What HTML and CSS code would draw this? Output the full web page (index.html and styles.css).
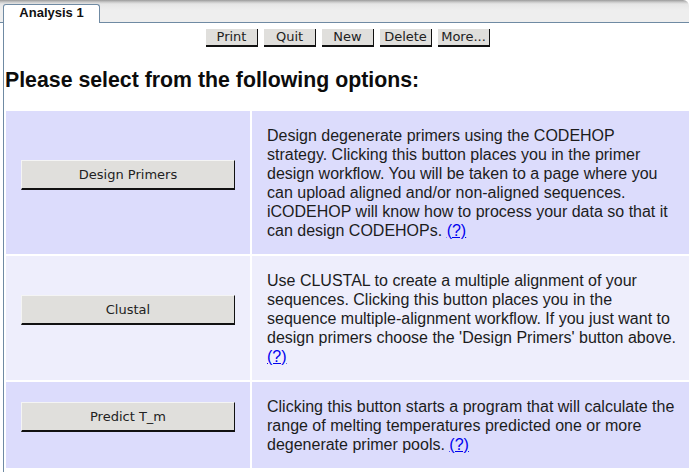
FILE: index.html
```html
<!DOCTYPE html>
<html>
<head>
<meta charset="utf-8">
<link rel="stylesheet" href="styles.css">
</head>
<body>
<div class="tabbar">
  <div class="tab">Analysis 1</div>
</div>
<div class="panel">
  <div class="toolbar">
    <button class="tbtn">Print</button>
    <button class="tbtn">Quit</button>
    <button class="tbtn">New</button>
    <button class="tbtn">Delete</button>
    <button class="tbtn">More...</button>
  </div>
  <h1 class="title">Please select from the following options:</h1>
  <table class="options">
    <tr class="row dark">
      <td class="act"><form class="form"><button type="button" class="obtn">Design Primers</button></form></td>
      <td class="desc">Design degenerate primers using the CODEHOP strategy. Clicking this button places you in the primer design workflow. You will be taken to a page where you can upload aligned and/or non-aligned sequences. iCODEHOP will know how to process your data so that it can design CODEHOPs. <a href="#">(?)</a></td>
    </tr>
    <tr class="row light">
      <td class="act"><form class="form"><button type="button" class="obtn">Clustal</button></form></td>
      <td class="desc">Use CLUSTAL to create a multiple alignment of your sequences. Clicking this button places you in the sequence multiple-alignment workflow. If you just want to design primers choose the 'Design Primers' button above. <a href="#">(?)</a></td>
    </tr>
    <tr class="row dark">
      <td class="act"><form class="form"><button type="button" class="obtn">Predict T_m</button></form></td>
      <td class="desc">Clicking this button starts a program that will calculate the range of melting temperatures predicted one or more degenerate primer pools. <a href="#">(?)</a></td>
    </tr>
  </table>
</div>
</body>
</html>
```

FILE: styles.css
```css
html, body {
  margin: 0;
  padding: 0;
  background: #ffffff;
  overflow: hidden;
}
body {
  font-family: "Liberation Sans", Arial, sans-serif;
  color: #1c1c1c;
}
.tabbar {
  height: 22px;
  background: linear-gradient(#9a9a9a 0px, #c8c8c8 2px, #e6e6e6 4px, #eeeeee 10px, #eeeeee);
  border-bottom: 1px solid #6f8aa3;
  border-top-right-radius: 6px;
  padding-left: 3px;
  display: flex;
  align-items: flex-end;
}
.tab {
  width: 97px;
  height: 19px;
  box-sizing: border-box;
  background: #ffffff;
  border: 1px solid #6f8aa3;
  border-bottom: none;
  border-radius: 3px 3px 0 0;
  font-weight: bold;
  font-size: 13px;
  text-align: center;
  line-height: 16px;
  color: #111;
  margin-bottom: -1px;
}
.panel {
  margin-left: 3px;
  border-left: 1px solid #6f8aa3;
  padding-left: 1px;
  height: 460px;
}
.toolbar {
  display: flex;
  justify-content: center;
  gap: 6px;
  padding-top: 6px;
  padding-left: 2px;
}
.tbtn {
  width: 52px;
  height: 18px;
  padding: 0;
  margin: 0;
  font-family: "DejaVu Sans", sans-serif;
  font-size: 13px;
  line-height: 16px;
  color: #222;
  background: #e0dfdc;
  border: none;
  border-right: 1px solid #111;
  border-bottom: 2px solid #111;
  box-sizing: border-box;
}
.title {
  font-size: 21.3px;
  font-weight: bold;
  margin: 21px 0 0 0;
  padding: 0;
  line-height: 24px;
  color: #0c0c0c;
}
.options {
  border-collapse: separate;
  border-spacing: 2px 2px;
  margin: 17px 0 0 -1px;
  width: 690px;
}
.row.dark td { background: #dcdcfc; }
.row.light td { background: #eeeefc; }
.act {
  width: 214px;
  padding: 15px;
  vertical-align: middle;
}
.form {
  margin: 0 0 16px 0;
}
.desc {
  padding: 15px 15px 14px 15px;
  font-size: 16px;
  line-height: 19px;
  vertical-align: middle;
}
.desc a { color: #0000ee; }
.obtn {
  display: block;
  width: 100%;
  height: 30px;
  margin: 0;
  padding: 0;
  font-family: "DejaVu Sans", sans-serif;
  font-size: 13px;
  color: #222;
  background: #e0dfdc;
  border: none;
  border-top: 1px solid #f4f4f4;
  border-left: 1px solid #f4f4f4;
  border-right: 1px solid #111;
  border-bottom: 2px solid #111;
  box-sizing: border-box;
}
```
